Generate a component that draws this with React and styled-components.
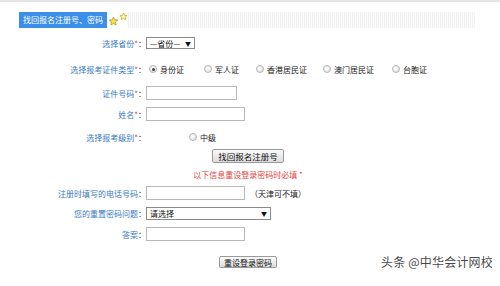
import React from "react";
import styled, { createGlobalStyle } from "styled-components";

const Global = createGlobalStyle`
  html, body { margin: 0; padding: 0; background: #fff; }
  body { width: 500px; height: 286px; overflow: hidden; font-family: "Noto Sans CJK SC", "Noto Sans", sans-serif; }
`;

const Page = styled.div`
  width: 500px;
  height: 286px;
  border-top: 2px solid #e4e4e4;
  box-sizing: border-box;
  position: relative;
`;

const Header = styled.div`
  display: flex;
  align-items: center;
  height: 16px;
  margin-top: 10px;
  padding-left: 19px;
  padding-right: 25px;
`;

const Tab = styled.div`
  background: #3c8fe8;
  color: #fff;
  font-size: 8px;
  height: 16px;
  line-height: 16px;
  padding: 0 4px;
  white-space: nowrap;
`;

const Stars = styled.svg`
  flex: none;
  margin-left: 1px;
`;

const Stripes = styled.div`
  flex: 1;
  height: 16px;
  background: repeating-linear-gradient(90deg, #f1f1f1 0 1px, #fbfbfb 1px 2px);
`;

const Form = styled.div`
  padding-top: 3px;
`;

const Row = styled.div`
  display: flex;
  align-items: center;
  height: ${(p) => p.$h}px;
  font-size: 8px;
`;

const CenterRow = styled(Row)`
  justify-content: center;
  padding-right: 4px;
`;

const Label = styled.div`
  width: 146px;
  flex: none;
  text-align: right;
  color: #3a7bbf;
  white-space: nowrap;
`;

const Req = styled.span`
  color: #e23b3b;
`;

const Colon = styled.span`
  color: #333;
`;

const Value = styled.div`
  display: flex;
  align-items: center;
  color: #222;
  margin-left: ${(p) => p.$ml || 0}px;
`;

const SelectBox = styled.div`
  box-sizing: border-box;
  width: ${(p) => p.$w}px;
  height: ${(p) => p.$ht}px;
  border: 1px solid #8a8a8a;
  background: #fff;
  display: flex;
  align-items: center;
  justify-content: space-between;
  padding: 0 3px 0 3px;
  color: #111;
  font-size: 8px;
`;

const Arrow = styled.span`
  font-size: 6px;
  color: #111;
`;

const Input = styled.div`
  box-sizing: border-box;
  width: ${(p) => p.$w}px;
  height: 14px;
  border: 1px solid #b8b8b8;
  background: #fff;
`;

const RadioItem = styled.div`
  display: flex;
  align-items: center;
  margin-right: ${(p) => p.$mr || 0}px;
  color: #222;
`;

const Circle = styled.span`
  width: 6px;
  height: 6px;
  border-radius: 50%;
  border: 1px solid #b5b5b5;
  background: radial-gradient(circle at 40% 40%, #fff, #dcdcdc);
  margin-right: 3px;
  display: flex;
  align-items: center;
  justify-content: center;
  &::after {
    content: "";
    width: 3px;
    height: 3px;
    border-radius: 50%;
    background: ${(p) => (p.$on ? "#444" : "transparent")};
  }
`;

const Button = styled.div`
  box-sizing: border-box;
  height: ${(p) => p.$ht}px;
  padding: 0 ${(p) => p.$px}px;
  border: 1px solid #9a9a9a;
  border-radius: 2px;
  background: linear-gradient(#fbfbfb, #dcdcdc);
  display: flex;
  align-items: center;
  font-size: ${(p) => p.$fs}px;
  color: #111;
  white-space: nowrap;
`;

const RedNote = styled.div`
  color: #e5443c;
  font-size: 8px;
`;

const Hint = styled.span`
  margin-left: 5px;
  color: #222;
`;

const Watermark = styled.div`
  position: absolute;
  right: 7px;
  bottom: 16px;
  font-size: 12px;
  color: #4a4a4a;
  letter-spacing: 0.2px;
`;

function Radio({ on, children, mr }) {
  return (
    <RadioItem $mr={mr}>
      <Circle $on={on} />
      {children}
    </RadioItem>
  );
}

function Field({ label, req }) {
  return (
    <Label>
      {label}
      {req && <Req>*</Req>}
      <Colon>：</Colon>
    </Label>
  );
}

export default function App() {
  return (
    <Page>
      <Global />
      <Header>
        <Tab>找回报名注册号、密码</Tab>
        <Stars width="20" height="16" viewBox="0 0 20 16">
          <path d="M5.5 5 L6.8 7.8 L9.8 8.1 L7.5 10.1 L8.2 13 L5.5 11.5 L2.8 13 L3.5 10.1 L1.2 8.1 L4.2 7.8 Z" fill="#f4e04a" stroke="#a89a2a" strokeWidth="0.8" />
          <path d="M15.5 1 L16.6 3.3 L19.1 3.6 L17.2 5.3 L17.8 7.8 L15.5 6.5 L13.2 7.8 L13.8 5.3 L11.9 3.6 L14.4 3.3 Z" fill="#fff6b0" stroke="#c9b52a" strokeWidth="0.9" />
        </Stars>
        <Stripes />
      </Header>
      <Form>
        <Row $h={24}>
          <Field label="选择省份" req />
          <Value>
            <SelectBox $w={49} $ht={12}>
              <span>—省份—</span>
              <Arrow>▼</Arrow>
            </SelectBox>
          </Value>
        </Row>
        <Row $h={28}>
          <Field label="选择报考证件类型" req />
          <Value $ml={3}>
            <Radio on mr={20}>身份证</Radio>
            <Radio mr={17}>军人证</Radio>
            <Radio mr={16}>香港居民证</Radio>
            <Radio mr={18}>澳门居民证</Radio>
            <Radio>台胞证</Radio>
          </Value>
        </Row>
        <Row $h={20}>
          <Field label="证件号码" req />
          <Value>
            <Input $w={91} />
          </Value>
        </Row>
        <Row $h={22}>
          <Field label="姓名" req />
          <Value>
            <Input $w={99} />
          </Value>
        </Row>
        <Row $h={24}>
          <Field label="选择报考级别" req />
          <Value $ml={43}>
            <Radio>中级</Radio>
          </Value>
        </Row>
        <CenterRow $h={14}>
          <Button $ht={14} $px={5} $fs={8.5}>找回报名注册号</Button>
        </CenterRow>
        <CenterRow $h={22}>
          <RedNote>以下信息重设登录密码时必填 *</RedNote>
        </CenterRow>
        <Row $h={16}>
          <Field label="注册时填写的电话号码" />
          <Value>
            <Input $w={99} />
            <Hint>（天津可不填）</Hint>
          </Value>
        </Row>
        <Row $h={24}>
          <Field label="您的重置密码问题" />
          <Value>
            <SelectBox $w={125} $ht={13}>
              <span>请选择</span>
              <Arrow>▼</Arrow>
            </SelectBox>
          </Value>
        </Row>
        <Row $h={18}>
          <Field label="答案" />
          <Value>
            <Input $w={99} />
          </Value>
        </Row>
        <CenterRow $h={38}>
          <Button $ht={12} $px={4} $fs={8}>重设登录密码</Button>
        </CenterRow>
      </Form>
      <Watermark>头条 @中华会计网校</Watermark>
    </Page>
  );
}
